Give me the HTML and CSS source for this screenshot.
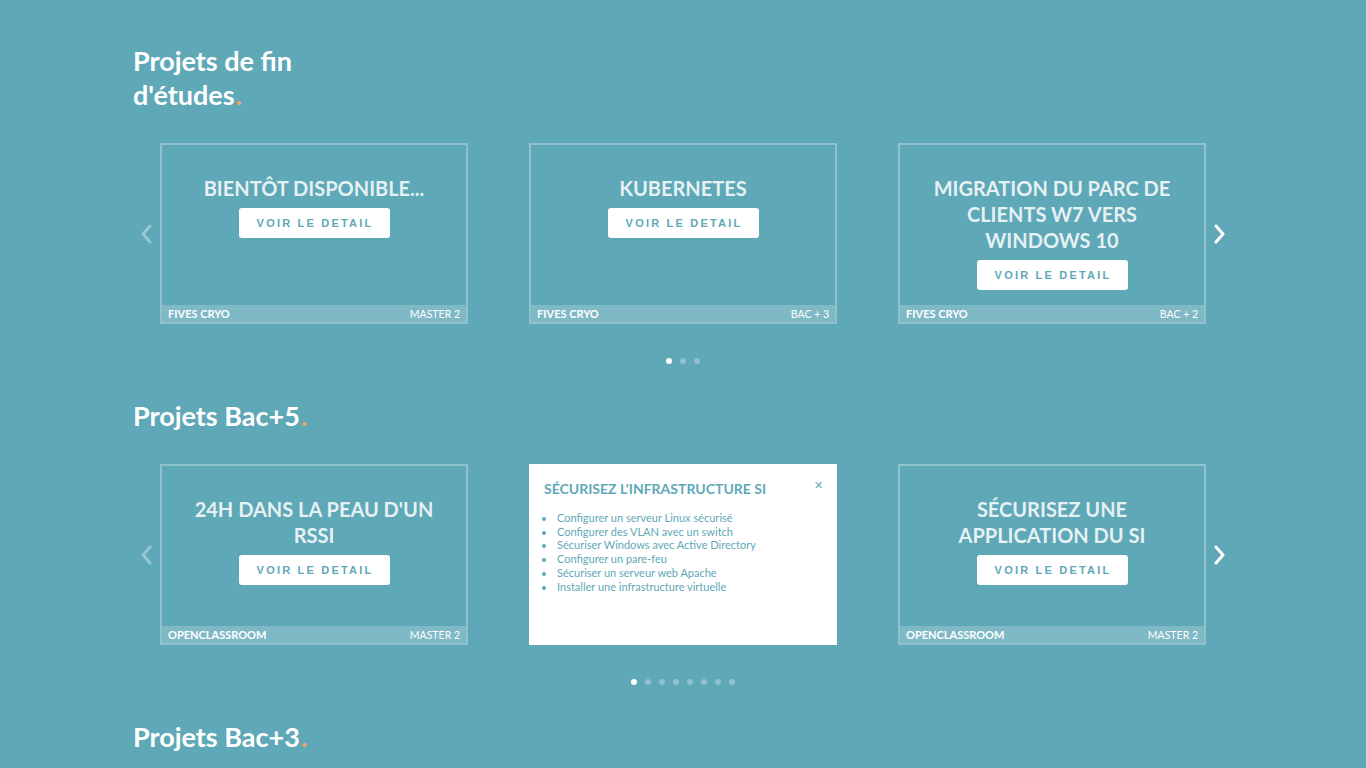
FILE: index.html
```html
<!DOCTYPE html>
<html lang="fr">
<head>
<meta charset="utf-8">
<title>Projets</title>
<link rel="stylesheet" href="styles.css">
</head>
<body>
<main class="page">
  <section class="section">
    <h2 class="heading heading-narrow">Projets de fin d'études<span class="dot-accent">.</span></h2>
    <div class="carousel">
      <button class="arrow arrow-prev" aria-label="Précédent"><svg viewBox="0 0 12 20" width="12" height="20"><path d="M10 2 L3 10 L10 18" fill="none" stroke="currentColor" stroke-width="3" stroke-linecap="round" stroke-linejoin="round"/></svg></button>
      <div class="cards">
        <article class="card">
          <div class="card-body">
            <h3 class="card-title">Bientôt disponible...</h3>
            <a class="btn">Voir le detail</a>
          </div>
          <div class="card-foot"><span class="org">FIVES CRYO</span><span class="level">MASTER 2</span></div>
        </article>
        <article class="card">
          <div class="card-body">
            <h3 class="card-title">Kubernetes</h3>
            <a class="btn">Voir le detail</a>
          </div>
          <div class="card-foot"><span class="org">FIVES CRYO</span><span class="level">BAC + 3</span></div>
        </article>
        <article class="card">
          <div class="card-body">
            <h3 class="card-title">Migration du parc de clients W7 vers Windows 10</h3>
            <a class="btn">Voir le detail</a>
          </div>
          <div class="card-foot"><span class="org">FIVES CRYO</span><span class="level">BAC + 2</span></div>
        </article>
      </div>
      <button class="arrow arrow-next" aria-label="Suivant"><svg viewBox="0 0 12 20" width="12" height="20"><path d="M2 2 L9 10 L2 18" fill="none" stroke="currentColor" stroke-width="3" stroke-linecap="round" stroke-linejoin="round"/></svg></button>
    </div>
    <div class="dots"><span class="dot active"></span><span class="dot"></span><span class="dot"></span></div>
  </section>

  <section class="section">
    <h2 class="heading">Projets Bac+5<span class="dot-accent">.</span></h2>
    <div class="carousel">
      <button class="arrow arrow-prev" aria-label="Précédent"><svg viewBox="0 0 12 20" width="12" height="20"><path d="M10 2 L3 10 L10 18" fill="none" stroke="currentColor" stroke-width="3" stroke-linecap="round" stroke-linejoin="round"/></svg></button>
      <div class="cards">
        <article class="card">
          <div class="card-body">
            <h3 class="card-title">24H dans la peau d'un RSSI</h3>
            <a class="btn">Voir le detail</a>
          </div>
          <div class="card-foot"><span class="org">OPENCLASSROOM</span><span class="level">MASTER 2</span></div>
        </article>
        <article class="card card-open">
          <div class="detail-head">
            <h3 class="detail-title">Sécurisez l'infrastructure SI</h3>
            <span class="close">&#x2715;</span>
          </div>
          <ul class="detail-list">
            <li>Configurer un serveur Linux sécurisé</li>
            <li>Configurer des VLAN avec un switch</li>
            <li>Sécuriser Windows avec Active Directory</li>
            <li>Configurer un pare-feu</li>
            <li>Sécuriser un serveur web Apache</li>
            <li>Installer une infrastructure virtuelle</li>
          </ul>
        </article>
        <article class="card">
          <div class="card-body">
            <h3 class="card-title">Sécurisez une application du SI</h3>
            <a class="btn">Voir le detail</a>
          </div>
          <div class="card-foot"><span class="org">OPENCLASSROOM</span><span class="level">MASTER 2</span></div>
        </article>
      </div>
      <button class="arrow arrow-next" aria-label="Suivant"><svg viewBox="0 0 12 20" width="12" height="20"><path d="M2 2 L9 10 L2 18" fill="none" stroke="currentColor" stroke-width="3" stroke-linecap="round" stroke-linejoin="round"/></svg></button>
    </div>
    <div class="dots"><span class="dot active"></span><span class="dot"></span><span class="dot"></span><span class="dot"></span><span class="dot"></span><span class="dot"></span><span class="dot"></span><span class="dot"></span></div>
  </section>

  <section class="section">
    <h2 class="heading">Projets Bac+3<span class="dot-accent">.</span></h2>
  </section>
</main>
</body>
</html>
```

FILE: styles.css
```css
* { box-sizing: border-box; }
html, body { margin: 0; padding: 0; }
body {
  background: #5fa8b8;
  font-family: "Lato", "Liberation Sans", sans-serif;
  color: #fff;
  overflow: hidden;
}
.page {
  width: 1100px;
  margin: 0 auto;
  padding-top: 44px;
}
.section { margin-bottom: 35px; }
.heading {
  margin: 0 0 31px;
  font-family: "Lato", sans-serif;
  font-weight: 700;
  font-size: 27px;
  line-height: 34px;
  color: #fff;
}
.heading-narrow { width: 220px; }
.dot-accent { color: #f2a45c; padding-left: 1px; }

.carousel {
  display: flex;
  align-items: center;
}
.arrow {
  width: 27px;
  height: 30px;
  padding: 0;
  border: 0;
  background: none;
  color: rgba(255,255,255,0.35);
  display: flex;
  align-items: center;
  justify-content: center;
}
.arrow-prev { justify-content: flex-start; padding-left: 7px; }
.arrow-next { color: #fff; justify-content: flex-end; padding-right: 7px; }
.cards {
  flex: 1;
  display: flex;
  gap: 61px;
}
.card {
  width: 308px;
  height: 181px;
  border: 2px solid rgba(255,255,255,0.3);
  display: flex;
  flex-direction: column;
}
.card-body {
  flex: 1;
  display: flex;
  flex-direction: column;
  align-items: center;
  padding: 30px 24px 0;
}
.card-title {
  margin: 0;
  font-family: "Lato", sans-serif;
  font-weight: 700;
  font-size: 20px;
  line-height: 26px;
  text-transform: uppercase;
  text-align: center;
  color: rgba(255,255,255,0.85);
}
.btn {
  margin-top: 7px;
  width: 151px;
  height: 30px;
  background: #fff;
  border-radius: 3px;
  display: flex;
  align-items: center;
  justify-content: center;
  font-family: "Liberation Sans", Arial, sans-serif;
  font-weight: 700;
  font-size: 11px;
  letter-spacing: 2.2px;
  text-transform: uppercase;
  color: #5fa8b8;
  padding-left: 2px;
}
.card-foot {
  height: 17px;
  background: rgba(255,255,255,0.2);
  display: flex;
  justify-content: space-between;
  align-items: center;
  padding: 0 6px;
  font-family: "Lato", sans-serif;
  font-size: 10.5px;
  color: #fff;
}
.org { font-weight: 700; font-size: 11px; }
.level { font-weight: 400; }

.card-open {
  background: #fff;
  padding: 13px 12px 0 13px;
  color: #5fa8b8;
}
.detail-head {
  display: flex;
  justify-content: space-between;
  align-items: flex-start;
}
.detail-title {
  margin: 2px 0 0;
  font-family: "Lato", sans-serif;
  font-weight: 700;
  font-size: 14px;
  line-height: 16px;
  text-transform: uppercase;
  color: #5fa8b8;
}
.close {
  font-size: 11px;
  line-height: 12px;
  color: #5fa8b8;
  margin-top: 0;
}
.detail-list {
  margin: 14px 0 0;
  padding-left: 12px;
  font-family: "Lato", sans-serif;
  font-size: 11px;
  line-height: 13.7px;
  color: #5fa8b8;
}
.detail-list li { padding-left: 1px; }

.dots {
  display: flex;
  justify-content: center;
  gap: 8px;
  margin-top: 34px;
}
.dot {
  width: 6px;
  height: 6px;
  border-radius: 50%;
  background: rgba(255,255,255,0.3);
}
.dot.active { background: #fff; }
```
